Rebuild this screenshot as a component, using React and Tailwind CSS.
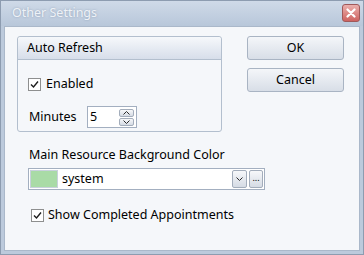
import React from "react";

const font = { fontFamily: '"Segoe UI", "Noto Sans", "Open Sans", sans-serif' };

const CheckBox = ({ checked }) => (
  <span className="w-[13px] h-[13px] border border-[#8e8f8f] bg-white flex items-center justify-center shrink-0">
    {checked && (
      <svg width="9" height="9" viewBox="0 0 9 9">
        <path d="M1 4.5 L3.5 7 L8 1.5" fill="none" stroke="#1d1d1d" strokeWidth="1.4" />
      </svg>
    )}
  </span>
);

const SmallButton = ({ children, className = "" }) => (
  <span
    className={`flex items-center justify-center border border-[#a3adbb] rounded-[2px] bg-gradient-to-b from-[#f7f8fa] to-[#d5dbe4] ${className}`}
  >
    {children}
  </span>
);

const Chevron = ({ up }) => (
  <svg width="7" height="4" viewBox="0 0 7 4">
    <path d={up ? "M0.5 3.5 L3.5 0.5 L6.5 3.5" : "M0.5 0.5 L3.5 3.5 L6.5 0.5"} fill="none" stroke="#2a2a2a" strokeWidth="1" />
  </svg>
);

const DialogButton = ({ label }) => (
  <button className="w-[97px] h-[24px] border border-[#a9b4c3] rounded-[3px] bg-gradient-to-b from-[#f4f6f9] to-[#d8dee7] text-[12.5px] text-black">
    {label}
  </button>
);

export default function App() {
  return (
    <div style={font} className="w-[364px] h-[255px] flex flex-col border border-[#8d9cb0] bg-[#bccadc] text-[12.5px] text-black">
      {/* title bar */}
      <div className="h-[25px] flex items-center justify-between pl-[11px] pr-[3px] bg-gradient-to-b from-[#cfdae8] to-[#b8c7da]">
        <span className="text-[12.5px] text-[#eef2f7] [text-shadow:0_0_2px_rgba(90,110,140,0.5)]">Other Settings</span>
        <span className="w-[18px] h-[18px] mb-[2px] flex items-center justify-center border border-[#a0595a] rounded-[3px] bg-gradient-to-b from-[#eab0ae] to-[#cd6260]">
          <svg width="10" height="10" viewBox="0 0 10 10">
            <path d="M1.5 1.5 L8.5 8.5 M8.5 1.5 L1.5 8.5" stroke="#ffffff" strokeWidth="2.2" strokeLinecap="round" />
          </svg>
        </span>
      </div>

      {/* client area */}
      <div className="flex-1 mx-[3px] mb-[3px] border border-[#aab8ca] bg-[#f5f7fa] pt-[9px] pl-[12px] pr-[15px]">
        <div className="flex items-start">
          {/* group box */}
          <div className="w-[205px] h-[96px] border border-[#b3bfce] rounded-[3px] flex flex-col">
            <div className="h-[23px] flex items-center pl-[9px] border-b border-[#b3bfce] rounded-t-[3px] bg-gradient-to-b from-[#f6f8fb] to-[#d7deea]">
              Auto Refresh
            </div>
            <div className="flex flex-col pl-[10px] pt-[18px]">
              <div className="flex items-center gap-[5px] h-[13px]">
                <CheckBox checked />
                <span>Enabled</span>
              </div>
              <div className="flex items-center mt-[15px]">
                <span className="ml-[1px] w-[58px]">Minutes</span>
                <div className="w-[50px] h-[22px] border border-[#a3afc0] bg-white flex items-center justify-between pl-[2px] pr-[2px]">
                  <span>5</span>
                  <div className="flex flex-col gap-[1px]">
                    <SmallButton className="w-[15px] h-[8px]"><Chevron up /></SmallButton>
                    <SmallButton className="w-[15px] h-[8px]"><Chevron /></SmallButton>
                  </div>
                </div>
              </div>
            </div>
          </div>

          <div className="ml-auto flex flex-col gap-[8px] pt-0">
            <DialogButton label="OK" />
            <DialogButton label="Cancel" />
          </div>
        </div>

        {/* background color */}
        <div className="ml-[12px] mt-[15px] leading-[16px]">Main Resource Background Color</div>
        <div className="ml-[11px] mt-[5px] w-[237px] h-[22px] border border-[#a3afc0] bg-white flex items-center pl-[1px] pr-[1px]">
          <span className="w-[28px] h-[18px] bg-[#a9dba6] border border-[#c8d1dc]" />
          <span className="ml-[4px] flex-1">system</span>
          <SmallButton className="w-[15px] h-[18px]"><Chevron /></SmallButton>
          <SmallButton className="w-[14px] h-[18px] ml-[2px] text-[9px] leading-none pb-[3px]">...</SmallButton>
        </div>

        <div className="ml-[14px] mt-[19px] flex items-center gap-[4px] h-[13px]">
          <CheckBox checked />
          <span>Show Completed Appointments</span>
        </div>
      </div>
    </div>
  );
}
